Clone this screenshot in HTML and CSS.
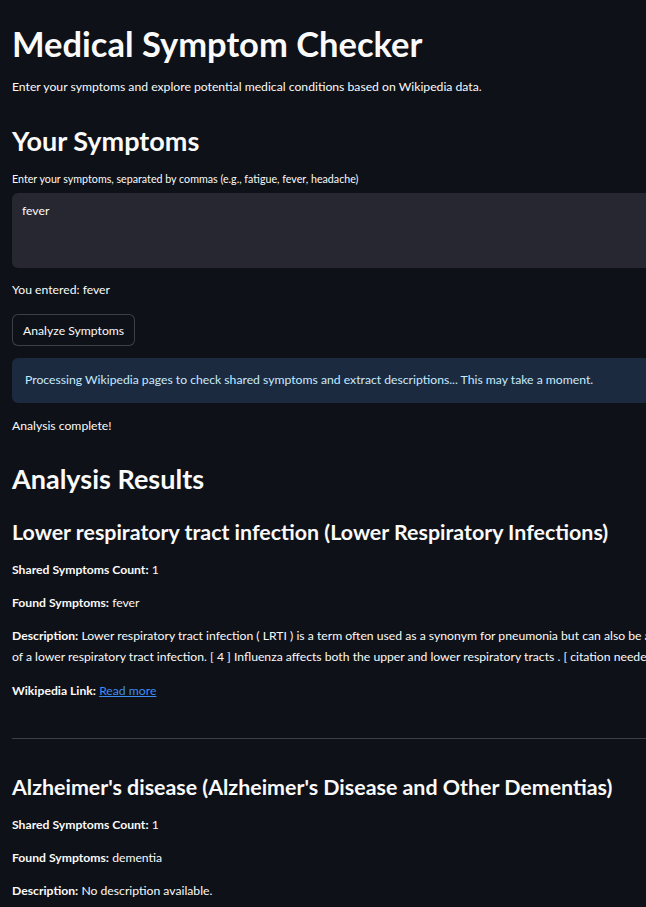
FILE: index.html
```html
<!DOCTYPE html>
<html>
<head>
	<title>Medical Symptom Checker</title>
	<link rel="stylesheet" href="styles.css">
</head>
<body>
<div class="main">

	<h1 class="title">Medical Symptom Checker</h1>
	<p class="intro">Enter your symptoms and explore potential medical conditions based on Wikipedia data.</p>

	<h2 class="section">Your Symptoms</h2>
	<label class="field_label" for="symptoms">Enter your symptoms, separated by commas (e.g., fatigue, fever, headache)</label>
	<textarea class="symptom_box" id="symptoms">fever</textarea>

	<p class="entered">You entered: fever</p>

	<button class="analyze_btn">Analyze Symptoms</button>

	<div class="info_box">
		Processing Wikipedia pages to check shared symptoms and extract descriptions... This may take a moment.
	</div>

	<p class="done">Analysis complete!</p>

	<h2 class="section results_head">Analysis Results</h2>

	<!-- result 1 -->
	<h3 class="condition">Lower respiratory tract infection (Lower Respiratory Infections)</h3>
	<p class="row first_row"><b>Shared Symptoms Count:</b> 1</p>
	<p class="row"><b>Found Symptoms:</b> fever</p>
	<p class="row desc"><b>Description:</b> Lower respiratory tract infection ( LRTI ) is a term often used as a synonym for pneumonia but can also be applied to other types of infection including lung abscess and acute bronchitis . Symptoms include shortness of breath , weakness, fever, coughing and fatigue. A routine chest X-ray is not always necessary for people who have symptoms<br>of a lower respiratory tract infection. [ 4 ] Influenza affects both the upper and lower respiratory tracts . [ citation needed ]</p>
	<p class="row"><b>Wikipedia Link:</b> <a href="#">Read more</a></p>

	<hr class="divider">

	<!-- result 2 -->
	<h3 class="condition">Alzheimer's disease (Alzheimer's Disease and Other Dementias)</h3>
	<p class="row first_row"><b>Shared Symptoms Count:</b> 1</p>
	<p class="row"><b>Found Symptoms:</b> dementia</p>
	<p class="row"><b>Description:</b> No description available.</p>

</div>
</body>
</html>
```

FILE: styles.css
```css
html
{
	overflow: hidden;
}
body
{
	margin: 0;
	background-color: #0e1117;
	color: #fafafa;
	font-family: Lato, "Open Sans", sans-serif;
}
.main
{
	width: 1400px;
	padding: 0 12px;
	white-space: nowrap;
}
.title
{
	margin: 24px 0 0 0;
	font-size: 34.5px;
	font-weight: 700;
	line-height: 40px;
}
.intro
{
	margin: 14px 0 0 0;
	font-size: 12.2px;
	line-height: 18px;
}
.section
{
	margin: 28px 0 0 0;
	font-size: 27px;
	font-weight: 700;
	line-height: 34px;
}
.field_label
{
	display: block;
	margin-top: 13px;
	font-size: 10.7px;
	line-height: 16px;
}
.symptom_box
{
	display: block;
	box-sizing: border-box;
	margin-top: 6px;
	width: 100%;
	height: 75px;
	padding: 9px 10px;
	border: none;
	border-radius: 6px;
	background-color: #262730;
	color: #fafafa;
	font-family: inherit;
	font-size: 12.2px;
	line-height: 18px;
	resize: none;
	outline: none;
}
.entered
{
	margin: 13px 0 0 0;
	font-size: 12.2px;
	line-height: 18px;
}
.analyze_btn
{
	display: block;
	margin-top: 15px;
	height: 32px;
	padding: 0 10px;
	border: 1px solid rgba(250, 250, 250, 0.2);
	border-radius: 6px;
	background-color: #0e1117;
	color: #fafafa;
	font-family: inherit;
	font-size: 12.2px;
}
.info_box
{
	margin-top: 12px;
	height: 45px;
	box-sizing: border-box;
	padding: 13px 13px;
	border-radius: 6px;
	background-color: #1c2a3f;
	color: #c7ebff;
	font-size: 12.2px;
	line-height: 18px;
}
.done
{
	margin: 14px 0 0 0;
	font-size: 12.2px;
	line-height: 18px;
}
.results_head
{
	margin-top: 27px;
}
.condition
{
	margin: 22px 0 0 0;
	font-size: 21.4px;
	font-weight: 700;
	line-height: 28px;
}
.row
{
	margin: 15px 0 0 0;
	font-size: 12.2px;
	line-height: 18px;
}
.row b
{
	font-weight: 700;
}
.desc
{
	margin-top: 13px;
	line-height: 21px;
}
.row a
{
	color: #3d8df5;
}
.divider
{
	margin: 38px 0 0 0;
	border: none;
	border-top: 1px solid rgba(250, 250, 250, 0.2);
}
.divider + .condition
{
	margin-top: 34px;
}
```
